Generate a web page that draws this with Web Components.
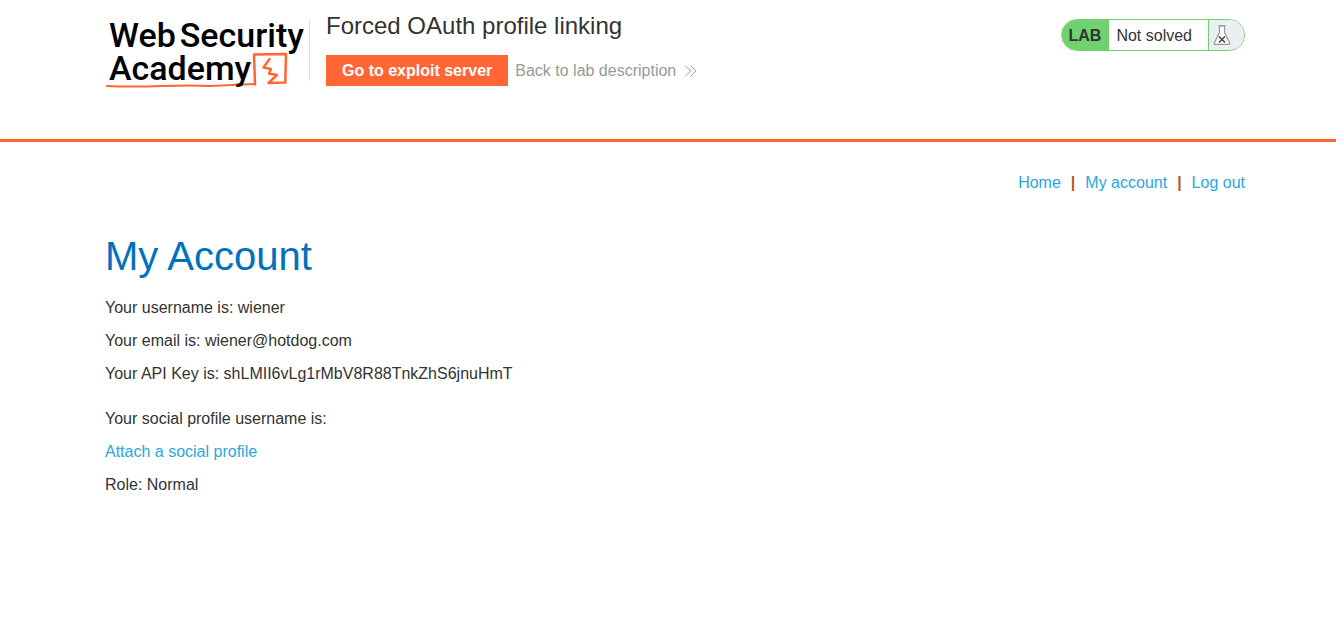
<!DOCTYPE html>
<html lang="en">
<head>
<meta charset="utf-8">
<meta name="viewport" content="width=device-width, initial-scale=1">
<title>Forced OAuth profile linking</title>
<style>
  body { margin: 0; background: #fff; color: #333332; font: 16px/24px "Liberation Sans", Arial, sans-serif; --page-start: 105px; --page-end: 91px; }
</style>
</head>
<body>
<lab-header>
  <academy-logo slot="logo"></academy-logo>
  <span slot="title">Forced OAuth profile linking</span>
  <lab-status slot="status">Not solved</lab-status>
</lab-header>
<account-page></account-page>

<script>
class ShadowElement extends HTMLElement {
  constructor() {
    super();
    this.attachShadow({ mode: "open" }).innerHTML = this.constructor.markup;
  }
}

customElements.define("academy-logo", class extends ShadowElement {
  static markup = `
    <style>
      :host { display: block; }
      a { display: block; position: relative; color: #000; text-decoration: none; font: 500 34px/33px Roboto, sans-serif; }
      .line { display: flex; gap: 4px; padding-left: 4px; }
      svg { position: absolute; left: 0; top: 33px; width: 190px; height: 40px; z-index: -1; }
    </style>
    <a href="#" aria-label="Web Security Academy">
      <svg viewBox="0 0 190 40" fill="none" stroke="#ff6633" stroke-linecap="round" stroke-linejoin="round" aria-hidden="true">
        <path d="M2 34 C45 36 70 32 105 34 L150 32" stroke-width="2"/>
        <path d="M150 32.500L149 2.500L181 2L180.300 30.500L164 31" stroke-width="2.500"/>
        <path d="M164.500 7L158.500 15.500L166 17L164 21.500L172 23L163.500 31" stroke-width="2.500"/>
      </svg>
      <span class="line"><span>Web</span><span>Security</span></span>
      <span class="line">Academy</span>
    </a>`;
});

customElements.define("lab-status", class extends ShadowElement {
  static markup = `
    <style>
      :host { display: flex; box-sizing: border-box; height: 32px; border: 1px solid #70d26f; border-radius: 16px; overflow: hidden; line-height: 32px; }
      strong { padding: 0 8px 0 7px; background: #70d26f; font-weight: bold; }
      .state { padding: 0 16px 0 7px; line-height: 31px; }
      .icon { display: flex; align-items: center; width: 31px; padding-left: 4px; border-left: 1px solid #70d26f; background: #eaeff2; }
      svg { width: 18px; height: 20px; }
    </style>
    <strong>LAB</strong>
    <span class="state"><slot></slot></span>
    <span class="icon">
      <svg viewBox="0 0 18 20" aria-hidden="true">
        <path d="M6.500 .800V7.500L1.500 17.500V19.300H16.500V17.500L11.500 7.500V.800Z" fill="#fff" stroke="#999" stroke-width="1.200"/>
        <path d="M5.500 .700H12.500" stroke="#999" stroke-width="1.200"/>
        <path d="M6 11.500L12 17.500M12 11.500L6 17.500" stroke="#444" stroke-width="1.500"/>
      </svg>
    </span>`;
});

customElements.define("lab-header", class extends ShadowElement {
  static markup = `
    <style>
      :host { display: block; border-bottom: 3px solid #ff6633; }
      header { display: flex; align-items: flex-start; min-height: 120px; padding: 19px var(--page-end) 0 var(--page-start); }
      .brand { width: 204px; height: 62px; border-right: 1px solid #e2e2e2; }
      .intro { flex: 1; padding-left: 16px; }
      h2 { margin: -5px 0 17px; font-size: 24px; line-height: 24px; font-weight: normal; }
      .actions { display: flex; align-items: center; gap: 7px; }
      .server { padding: 0 16px; background: #ff6633; color: #fff; font-weight: bold; line-height: 31px; text-decoration: none; }
      .back { display: flex; align-items: center; gap: 8px; color: #999; text-decoration: none; }
      svg { width: 14px; height: 12px; fill: none; stroke: #999; }
    </style>
    <header>
      <div class="brand"><slot name="logo"></slot></div>
      <div class="intro">
        <h2><slot name="title"></slot></h2>
        <div class="actions">
          <a class="server" href="#">Go to exploit server</a>
          <a class="back" href="#">Back to lab description
            <svg viewBox="0 0 14 12" aria-hidden="true"><path d="M1 .500L6.500 6L1 11.500M6.500 .500L12 6L6.500 11.500"/></svg>
          </a>
        </div>
      </div>
      <slot name="status"></slot>
    </header>`;
});

customElements.define("account-page", class extends ShadowElement {
  static markup = `
    <style>
      :host { display: block; padding: 29px var(--page-end) 24px var(--page-start); }
      a { color: #29a7df; text-decoration: none; }
      nav { display: flex; justify-content: flex-end; gap: 10px; }
      nav span { color: #b35a1e; font-weight: bold; }
      h1 { margin: 37px 0 16px; color: #0071bc; font-size: 40px; line-height: 48px; font-weight: normal; }
      p { margin: 0 0 9px; }
      .social { margin-top: 21px; }
    </style>
    <nav aria-label="Account">
      <a href="#">Home</a><span>|</span><a href="#">My account</a><span>|</span><a href="#">Log out</a>
    </nav>
    <main>
      <h1>My Account</h1>
      <p>Your username is: wiener</p>
      <p>Your email is: wiener@hotdog.com</p>
      <p>Your API Key is: shLMII6vLg1rMbV8R88TnkZhS6jnuHmT</p>
      <div class="social">
        <p>Your social profile username is:</p>
        <p><a href="#">Attach a social profile</a></p>
        <p>Role: Normal</p>
      </div>
    </main>`;
});
</script>
</body>
</html>
